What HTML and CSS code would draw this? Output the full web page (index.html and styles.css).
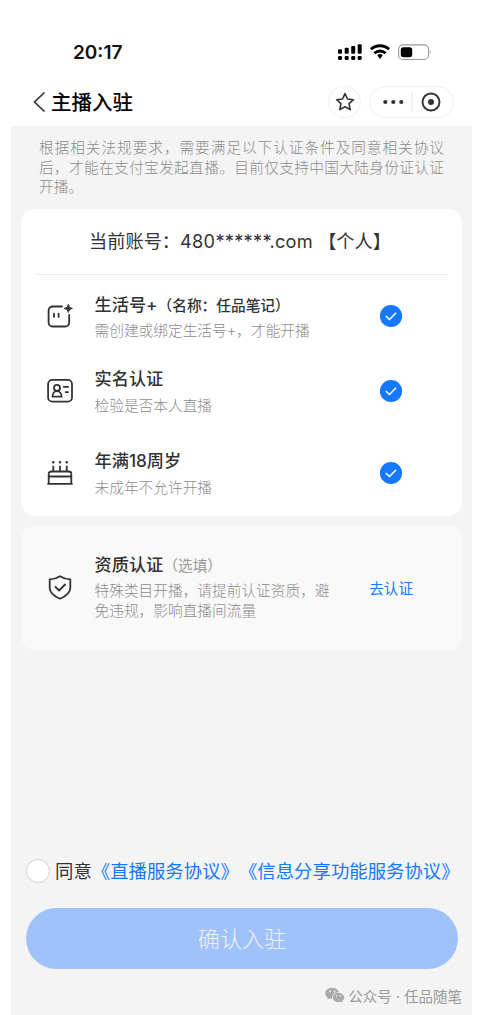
FILE: index.html
```html
<!DOCTYPE html>
<html lang="zh-CN">
<head>
<meta charset="utf-8">
<title>主播入驻</title>
<link rel="stylesheet" href="styles.css">
</head>
<body>
<div class="phone">
  <header class="top">
    <div class="status">
      <span class="clock">20:17</span>
      <svg class="status-icons" width="96" height="20" viewBox="0 0 96 20">
        <g fill="#000">
          <rect x="0" y="7.3" width="4" height="4.4" rx="1"/><rect x="6.7" y="5.7" width="4" height="6" rx="1"/><rect x="13.2" y="4" width="4" height="7.7" rx="1"/><rect x="19.7" y="2.2" width="4" height="9.5" rx="1"/>
          <rect x="0" y="14" width="4" height="4" rx="1.3"/><rect x="6.7" y="14" width="4" height="4" rx="1.3"/><rect x="13.2" y="14" width="4" height="4" rx="1.3"/><rect x="19.7" y="14" width="4" height="4" rx="1.3"/>
          <path d="M39.2 13.2a4.2 4.2 0 0 1 5.6 0L42 17z"/>
          <rect x="62.8" y="5.2" width="11.4" height="10" rx="2.6"/>
        </g>
        <g fill="none" stroke="#000" stroke-width="2.9">
          <path d="M32.9 7.3a13.4 13.4 0 0 1 18.2 0"/><path d="M36.4 11.2a8.3 8.3 0 0 1 11.2 0"/>
        </g>
        <rect x="60.6" y="2.9" width="30" height="14.6" rx="4.5" fill="none" stroke="#999" stroke-width="1.1"/>
        <path d="M92.3 8q1.7 2.1 0 4.3z" fill="#999"/>
      </svg>
    </div>
    <nav class="nav">
      <svg class="back" width="14" height="22" viewBox="0 0 14 22"><path d="M12.500 1.500 2.500 11l10 9.500" fill="none" stroke="#333" stroke-width="1.7"/></svg>
      <h1 class="nav-title">主播入驻</h1>
      <span class="star"><svg width="22" height="22" viewBox="0 0 22 22"><path d="m11 2.6 2.5 5.4 5.9.7-4.4 4 1.2 5.9-5.2-2.9-5.2 2.9L7 12.700 2.600 8.700l5.900-.7z" fill="none" stroke="#333" stroke-width="1.6" stroke-linejoin="round"/></svg></span>
      <span class="capsule">
        <svg width="84" height="32" viewBox="0 0 84 32">
          <g fill="#333"><circle cx="15.300" cy="16" r="2.100"/><circle cx="23.300" cy="16" r="2.100"/><circle cx="31.300" cy="16" r="2.100"/><circle cx="61" cy="16" r="3"/></g>
          <path d="M42 6.500v19" stroke="#e5e5e5"/>
          <circle cx="61" cy="16" r="8.500" fill="none" stroke="#333" stroke-width="1.900"/>
        </svg>
      </span>
    </nav>
  </header>

  <main class="content">
    <p class="intro">根据相关法规要求，需要满足以下认证条件及同意相关协议后，才能在支付宝发起直播。目前仅支持中国大陆身份证认证开播。</p>

    <section class="card">
      <h2 class="account">当前账号：<span class="account-id">480******.com</span> 【个人】</h2>
      <div class="row life">
        <svg class="icon" width="30" height="30" viewBox="0 0 30 30"><g fill="none" stroke="#333" stroke-width="1.800" stroke-linecap="round"><path d="M17 5.500H7.600a4 4 0 0 0-4 4v12a4 4 0 0 0 4 4h12.600a4 4 0 0 0 4-4v-7.700"/><path d="M9 12.700v3.200M13.600 12.700v3.200"/></g><path d="M23.300 3.200q.5 3.800 4.200 4.200-3.700.5-4.200 4.200-.5-3.700-4.200-4.200 3.700-.4 4.200-4.200z" fill="#333" stroke="#333" stroke-width=".8"/></svg>
        <div class="text"><h3>生活号+<small>（名称：任品笔记）</small></h3><p>需创建或绑定生活号+，才能开播</p></div>
        <svg class="check" width="24" height="24" viewBox="0 0 24 24"><circle cx="12" cy="12" r="11.100" fill="#1677ff"/><path d="m6.800 12 3.700 3.500 6.600-6.700" fill="none" stroke="#fff" stroke-width="1.500"/></svg>
      </div>
      <div class="row identity">
        <svg class="icon" width="30" height="30" viewBox="0 0 30 30"><g fill="none" stroke="#333" stroke-width="1.800" stroke-linecap="round" stroke-linejoin="round"><rect x="3.100" y="3.900" width="23.900" height="21.700" rx="4.200"/><circle cx="12" cy="11.900" r="3"/><path d="M7.500 20.700c0-7.400 9.100-7.400 9.100 0z"/><path d="M18.800 10.900h4.300M20.700 16.200h2.200"/></g></svg>
        <div class="text"><h3>实名认证</h3><p>检验是否本人直播</p></div>
        <svg class="check" width="24" height="24" viewBox="0 0 24 24"><circle cx="12" cy="12" r="11.100" fill="#1677ff"/><path d="m6.800 12 3.700 3.500 6.600-6.700" fill="none" stroke="#fff" stroke-width="1.500"/></svg>
      </div>
      <div class="row age">
        <svg class="icon" width="30" height="30" viewBox="0 0 30 30"><g fill="none" stroke="#333" stroke-width="1.800"><path d="M3.700 25.800V16a2.500 2.500 0 0 1 2.500-2.500h17.600a2.500 2.500 0 0 1 2.500 2.500v9.800M3 18.500h24M2.400 25.800h25.200"/><path d="M8.300 7.700v5.500M15 7.700v5.500M21.700 7.700v5.500"/></g><g fill="#333"><circle cx="8.300" cy="4.300" r="1.200"/><circle cx="15" cy="4.300" r="1.200"/><circle cx="21.700" cy="4.300" r="1.200"/></g></svg>
        <div class="text"><h3>年满18周岁</h3><p>未成年不允许开播</p></div>
        <svg class="check" width="24" height="24" viewBox="0 0 24 24"><circle cx="12" cy="12" r="11.100" fill="#1677ff"/><path d="m6.800 12 3.700 3.500 6.600-6.700" fill="none" stroke="#fff" stroke-width="1.500"/></svg>
      </div>
    </section>

    <section class="card optional">
      <svg class="icon" width="30" height="30" viewBox="0 0 30 30"><g fill="none" stroke="#333" stroke-width="1.800" stroke-linejoin="round"><path d="M15 4.200c3 2 6.500 2.900 10.300 3.200V16c0 5-4.500 8.200-10.300 10.800C9.200 24.200 4.700 21 4.700 16V7.400C8.500 7.100 12 6.200 15 4.200z"/><path d="m9.900 14.300 4.200 4.200 6.500-6.500"/></g></svg>
      <div class="text"><h3>资质认证<small>（选填）</small></h3><p>特殊类目开播，请提前认证资质，避免违规，影响直播间流量</p></div>
      <a class="verify">去认证</a>
    </section>

    <footer class="bottom">
      <div class="agree"><span class="radio"></span><div class="terms"><span>同意</span><a>《直播服务协议》</a><a>《信息分享功能服务协议》</a></div></div>
      <button class="submit">确认入驻</button>
      <div class="credit">
        <svg width="20" height="16" viewBox="0 0 20 16"><path fill="#aaa" d="M7.200.8C3.300.8.300 3.200.300 6.300c0 1.800 1 3.300 2.500 4.300l-.6 2 2.300-1.200c.8.200 1.600.4 2.700.4C6.700 8 9.200 5.200 13.800 5.200 13.300 2.700 10.600.8 7.200.8z"/><path fill="#aaa" d="M13.500 5.900c-3.300 0-5.700 2-5.700 4.600s2.500 4.600 5.700 4.600c.7 0 1.400-.1 2-.3l2 1-.6-1.800c1.400-.8 2.300-2 2.300-3.500 0-2.600-2.500-4.600-5.700-4.600z"/><g fill="#f4f4f4"><circle cx="5" cy="4.500" r=".9"/><circle cx="9.400" cy="4.500" r=".9"/><circle cx="11.700" cy="9.100" r=".75"/><circle cx="15.400" cy="9.100" r=".75"/></g></svg>
        <span>公众号 · 任品随笔</span>
      </div>
    </footer>
  </main>
</div>
</body>
</html>
```

FILE: styles.css
```css
* { box-sizing: border-box; }
body { margin: 0; background: #fff; color: #333; font-family: Inter, "Noto Sans CJK SC", sans-serif; text-spacing-trim: space-all; }
h1, h2, h3, p { margin: 0; }
svg { display: block; flex: none; }
.phone { width: 461px; height: 1015px; margin-left: 11px; display: flex; flex-direction: column; overflow: hidden; }
.top { height: 126px; flex: none; padding-top: 38px; }
.status { height: 28px; display: flex; align-items: center; justify-content: space-between; padding: 0 38px 0 62px; }
.clock { padding-top: 1px; font-size: 19px; font-weight: 600; color: #111; line-height: 28px; }
.nav { height: 32px; margin-top: 20px; display: flex; align-items: center; padding: 0 18px 0 21px; }
.nav-title { margin-left: 5px; padding-top: 2px; font-size: 20.5px; font-weight: 500; line-height: 32px; color: #000; white-space: nowrap; }
.star { width: 33px; height: 32px; margin-left: auto; border: 1px solid #f1f1f1; border-radius: 50%; display: flex; align-items: center; justify-content: center; }
.capsule { width: 85px; height: 32px; margin-left: 8px; border: 1px solid #f1f1f1; border-radius: 16px; display: flex; align-items: center; justify-content: center; }
.content { flex: 1; background: #f4f4f4; padding: 13px 10px 0; display: flex; flex-direction: column; }
.intro { height: 70px; margin: 0 18px; font-size: 14.7px; line-height: 19.5px; color: #8c8c8c; font-weight: 300; text-align: justify; }
.card { height: 307px; flex: none; background: #fff; border-radius: 14px; }
.account { height: 66px; margin: 0 14px 16px 15px; padding-right: 4px; border-bottom: 1px solid #eee; font-size: 18.2px; font-weight: 400; line-height: 64px; text-align: center; white-space: pre; }
.account-id { letter-spacing: .3px; }
.row { height: 52px; display: flex; align-items: center; padding: 0 59px 2px 24px; }
.identity { margin-top: 23px; }
.age { margin-top: 30px; }
.text { margin-left: 19.5px; flex: 1; color: #8c8c8c; }
.text h3 { font-size: 17.2px; font-weight: 500; line-height: 26px; color: #333; white-space: nowrap; }
.text h3 small { font-size: 14.7px; }
.text p { font-size: 14.7px; line-height: 28px; font-weight: 300; }
.row .text { align-self: flex-start; }
.life .text h3 { line-height: 28px; }
.life .text p { line-height: 22px; }
.optional { height: 124px; margin-top: 10px; background: #f9f9f9; display: flex; align-items: center; padding: 0 49px 2px 24px; }
.optional .text { flex: none; width: 240px; }
.optional .text h3 { line-height: 24px; }
.optional .text h3 small { color: #999; font-weight: 400; }
.optional .text p { margin-top: 4px; line-height: 19.5px; }
.verify { margin-left: auto; font-size: 14.6px; color: #1677ff; }
.bottom { margin-top: auto; padding: 0 4px 0 5px; }
.agree { height: 28px; display: flex; align-items: center; font-size: 18.4px; white-space: nowrap; }
.terms { padding-bottom: 2px; }
.terms a { color: #1677ff; }
.radio { flex: none; width: 24px; height: 24px; margin-right: 5px; border: 1px solid #d0d0d0; border-radius: 50%; background: #fff; }
.submit { display: block; width: 432px; height: 61px; margin-top: 23px; padding: 0 0 4px; border: 0; border-radius: 31px; background: #9fc2fb; color: #f1f1f1; font: 300 22.1px "Noto Sans CJK SC", sans-serif; }
.credit { height: 46px; display: flex; align-items: center; justify-content: flex-end; gap: 3px; padding-top: 6px; margin-right: -4px; font-size: 14.5px; color: #999; white-space: nowrap; }
```
